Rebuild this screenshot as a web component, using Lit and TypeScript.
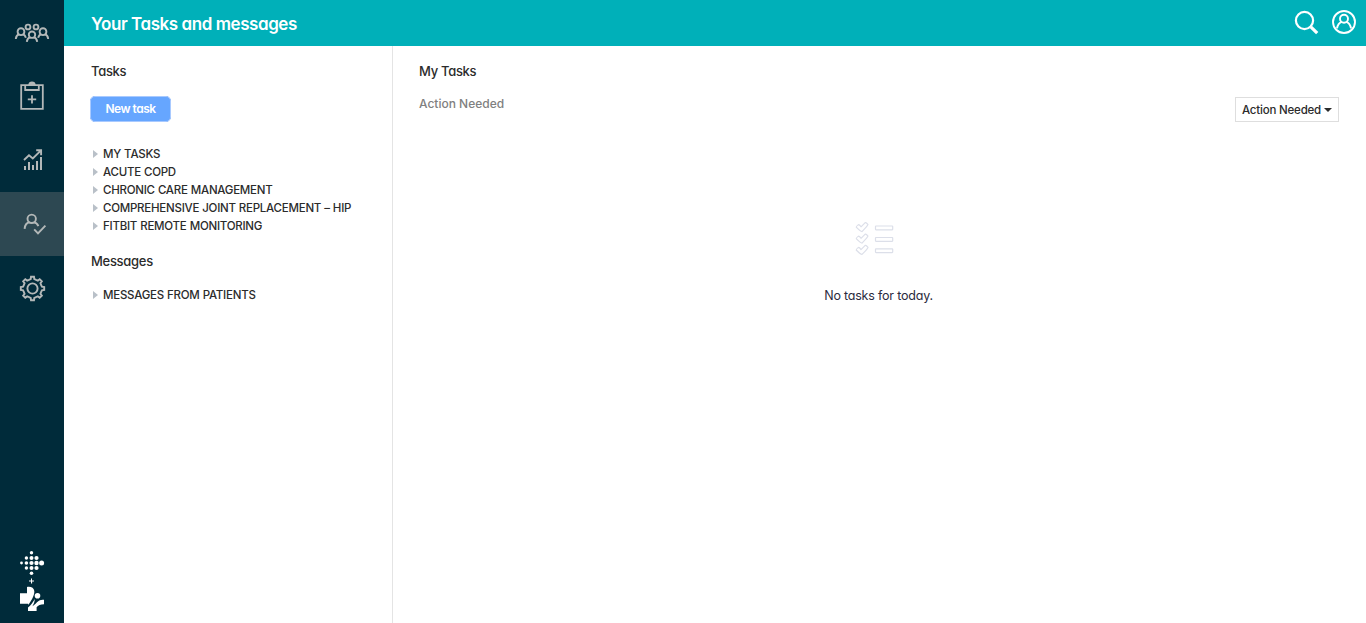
import { LitElement, html, svg, css } from "lit";
import { customElement } from "lit/decorators.js";
import { classMap } from "lit/directives/class-map.js";

const people = svg`
  <circle cx="28" cy="27" r="2.4"/><circle cx="36" cy="27" r="2.4"/>
  <circle cx="21" cy="31.7" r="3.4"/><circle cx="43" cy="31.7" r="3.4"/><circle cx="32" cy="34.7" r="3.2"/>
  <path d="M15.8 39c.2-2.3 1.4-4.2 3.4-5M22.8 34c1.6.6 2.6 1.9 3.1 3.8M48.2 39c-.2-2.3-1.4-4.2-3.4-5M41.2 34c-1.6.6-2.6 1.9-3.1 3.8M26.8 41.8c.2-2.2 1.4-3.9 3.4-4.6M37.2 41.8c-.2-2.2-1.4-3.9-3.4-4.6"/>`;

const clipboard = svg`
  <path d="M21.2 21.2h21.6v23.6H21.2zM25.2 21.8v4.2h13.6v-4.2M32 31.2v8.4M27.8 35.4h8.4" stroke-width="1.8"/>
  <path d="M29.3 20.8c.3-3 5.1-3 5.4 0z" fill="#b3b8b8"/>`;

const chart = svg`
  <path d="M24 32l5-4.8 3.8 3.2 8.2-8M36.2 22.3h4.9v5"/>
  <path d="M25 38v4M29 34v8M33 37v5M37 33v9M41 29v13" stroke-width="2"/>`;

const userCheck = svg`
  <circle cx="31.7" cy="26.8" r="4.2"/>
  <path d="M24.6 36.8c.3-3.4 2.2-6.1 5-6.5M33.8 30.3c2.2.3 3.8 1.8 4.6 3.9M34.2 37.4l3.8 4 7.4-7.8"/>`;

const teeth = [0, 45, 90, 135, 180, 225, 270, 315];
const gear = svg`
  <circle cx="32.5" cy="32.5" r="5.1"/>
  ${teeth.map(
    (a) => svg`<path transform="rotate(${a} 32.5 32.5)"
      d="M28.8 23.9l1.9-.8.3-2.3h3l.3 2.3 1.9.8"/>`
  )}`;

const nav = [
  { label: "Patients", icon: people, active: false },
  { label: "Care plans", icon: clipboard, active: false },
  { label: "Reports", icon: chart, active: false },
  { label: "Tasks", icon: userCheck, active: true },
  { label: "Settings", icon: gear, active: false },
];

@customElement("side-nav")
export class SideNav extends LitElement {
  static styles = css`
    :host {
      display: flex;
      flex-direction: column;
      justify-content: space-between;
      width: 64px;
      flex: none;
      background: #002b3a;
    }
    .item {
      display: block;
      height: 64px;
    }
    .active {
      background: #2d4852;
    }
    svg {
      display: block;
    }
    .icon {
      fill: none;
      stroke: #b3b8b8;
      stroke-width: 1.9;
    }
    .brand {
      fill: #fff;
    }
  `;

  render() {
    const dots: [number, number, number][] = [
      [31.5, 12.8, 1.7],
      [26.4, 18, 1.7], [31.5, 18, 2], [36.5, 18, 2.1],
      [21.5, 23, 1.4], [26.4, 23, 1.8], [31.5, 23, 2.1], [36.5, 23, 2.2], [41.6, 23, 2.5],
      [26.4, 28, 1.7], [31.5, 28, 2], [36.5, 28, 2.1],
      [31.5, 33.3, 1.8],
    ];
    return html`
      <nav>
        ${nav.map(
          (n) => html`<a class=${classMap({ item: true, active: n.active })} aria-label=${n.label}>
            <svg class="icon" width="64" height="64">${n.icon}</svg>
          </a>`
        )}
      </nav>
      <svg class="brand" width="64" height="83">
        ${dots.map(([x, y, r]) => svg`<circle cx=${x} cy=${y} r=${r}/>`)}
        <path d="M31 38.5h1v2h2v1h-1.9v2h-1.1v-2h-2v-1h2z"/>
        <path d="M27 47c3.4-.8 7 .6 7.3 4 .4 4.6-3.2 9.8-6.1 14v-1.2H20V53.2h7z"/>
        <circle cx="37.5" cy="55.8" r="2.8"/>
        <path d="M28 71v-3.4c3-2.2 4.6-5.4 6.8-8.6-.2 3-1 5-2.4 7.2 2.6-1.4 3.8-3.9 6.2-5.3 1.6-.8 3.4-1.1 5.4-1.1v4.4c-3.4 0-6 1-7.4 3V71z"/>
      </svg>
    `;
  }
}

@customElement("app-root")
export class AppRoot extends LitElement {
  static styles = css`
    :host {
      display: flex;
      height: 623px;
      background: #fff;
      color: #2b2b2b;
      font-family: Inter, "Open Sans", sans-serif;
      font-feature-settings: "cv11";
    }
    .page {
      flex: 1;
      display: flex;
      flex-direction: column;
      min-width: 0;
    }
    header {
      height: 46px;
      box-sizing: border-box;
      padding: 0 10px 1px 27px;
      background: #00b0b9;
      display: flex;
      align-items: center;
      justify-content: space-between;
      color: #fff;
    }
    h1,
    h2,
    h3,
    p,
    ul {
      margin: 0;
      padding: 0;
      font-weight: 500;
    }
    h1 {
      font-size: 17px;
      font-weight: 600;
      letter-spacing: -0.44px;
      line-height: 24px;
      padding-top: 3px;
    }
    .tools {
      display: flex;
      gap: 13px;
      fill: none;
      stroke: #fff;
    }
    .body {
      flex: 1;
      display: flex;
    }
    .lists {
      width: 329px;
      box-sizing: border-box;
      padding: 15px 0 0 26px;
      border-right: 1px solid #e4e4e4;
    }
    h2 {
      font-size: 13px;
      line-height: 20px;
      letter-spacing: -0.3px;
      padding-left: 1px;
    }
    .new {
      display: block;
      width: 81px;
      height: 26px;
      margin: 15px 0 23px;
      padding: 0;
      border: 1px solid #5c9bf5;
      outline: 1px solid #a9caff;
      outline-offset: -1px;
      border-radius: 5px;
      background: #66a6ff;
      color: #fff;
      font: 600 12px/24px Inter, sans-serif;
      font-feature-settings: "cv11";
      letter-spacing: -0.5px;
    }
    li {
      display: flex;
      align-items: center;
      gap: 5px;
      height: 18px;
      padding-left: 3px;
      font: 500 11.5px/18px "Inter", sans-serif;
      letter-spacing: -0.25px;
      word-spacing: 0.3px;
      white-space: nowrap;
    }
    .arrow {
      width: 0;
      border: 4.5px solid transparent;
      border-left: 5px solid #b9c0c8;
      border-right: 0;
    }
    .messages {
      margin: 16px 0 15px;
    }
    main {
      flex: 1;
      padding: 15px 27px 0 25px;
    }
    .bar {
      display: flex;
      justify-content: space-between;
      align-items: flex-start;
      height: 38px;
      padding-top: 16px;
      box-sizing: border-box;
    }
    h3 {
      font-size: 12px;
      line-height: 14px;
      color: #808080;
      padding-left: 1px;
      font-feature-settings: normal;
    }
    .select {
      display: flex;
      align-items: center;
      gap: 4px;
      box-sizing: border-box;
      width: 104px;
      height: 25px;
      padding-left: 6px;
      border: 1px solid #dedede;
      font-size: 11.5px;
      font-weight: 500;
      letter-spacing: -0.2px;
      white-space: nowrap;
      font-feature-settings: normal;
    }
    .caret {
      border: 4px solid transparent;
      border-top-color: #2b2b2b;
      border-bottom: 0;
      margin: 1px 0 0 -1px;
    }
    .empty {
      display: flex;
      flex-direction: column;
      align-items: center;
      padding-top: 102px;
    }
    .empty svg {
      fill: #fff;
      stroke: #dcdfe9;
      stroke-width: 1.2;
      margin-left: -8px;
    }
    .empty p {
      margin-top: 29px;
      font-size: 12.5px;
      line-height: 20px;
      letter-spacing: -0.2px;
      font-weight: 400;
      color: #2b2b40;
    }
  `;

  private row(text: string) {
    return html`<li><span class="arrow"></span><span>${text}</span></li>`;
  }

  render() {
    const tasks = [
      "MY TASKS",
      "ACUTE COPD",
      "CHRONIC CARE MANAGEMENT",
      "COMPREHENSIVE JOINT REPLACEMENT – HIP",
      "FITBIT REMOTE MONITORING",
    ];
    return html`
      <side-nav></side-nav>
      <div class="page">
        <header>
          <h1>Your Tasks and messages</h1>
          <div class="tools">
            <svg width="25" height="26" stroke-width="2.2">
              <circle cx="10.5" cy="10.5" r="8.6"/>
              <path d="M16.8 16.8l6.4 6.4" stroke-width="3.2"/>
            </svg>
            <svg width="24" height="26" stroke-width="1.9">
              <circle cx="12" cy="12" r="11"/>
              <circle cx="12" cy="8.8" r="4"/>
              <path d="M5 18.3c.6-3.6 2.3-5.7 4.8-6.5M19 18.3c-.6-3.6-2.3-5.7-4.8-6.5"/>
            </svg>
          </div>
        </header>
        <div class="body">
          <aside class="lists">
            <h2>Tasks</h2>
            <button class="new">New task</button>
            <ul>${tasks.map((t) => this.row(t))}</ul>
            <h2 class="messages">Messages</h2>
            <ul>${this.row("MESSAGES FROM PATIENTS")}</ul>
          </aside>
          <main>
            <h2>My Tasks</h2>
            <div class="bar">
              <h3>Action Needed</h3>
              <div class="select">Action Needed<span class="caret"></span></div>
            </div>
            <div class="empty">
              <svg width="40" height="36">
                ${[0, 11.5, 22.8].map(
                  (y) => svg`<g transform="translate(0 ${y})">
                    <path d="M1.2 6.2Q1 5.6 3.4 3.6Q4.6 3.6 6 5.8L10.2 1.6Q11.2 1.2 13 3.6Q13 4.4 7 10.6Q5.6 10.6 1.2 6.2z" stroke-linejoin="round"/>
                    <rect x="20.5" y="5" width="17.2" height="3.8" rx=".5"/>
                  </g>`
                )}
              </svg>
              <p>No tasks for today.</p>
            </div>
          </main>
        </div>
      </div>
    `;
  }
}
